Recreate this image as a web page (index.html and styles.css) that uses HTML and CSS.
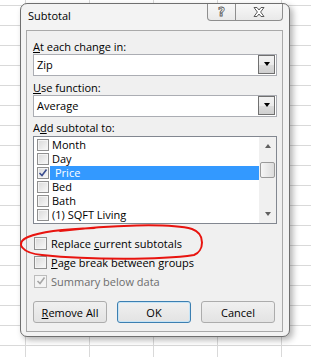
FILE: index.html
```html
<!DOCTYPE html>
<html lang="en">

<head>
    <meta charset="utf-8">
    <meta name="viewport" content="width=device-width, initial-scale=1">
    <title>Subtotal</title>
    <link rel="stylesheet" href="styles.css">
</head>

<body>
    <div class="dialog">
        <div class="titlebar">
            <span class="title">Subtotal</span>
            <div class="caption-btns">
                <span class="cap-btn help">?</span>
                <span class="cap-btn close">
                    <svg width="12" height="10" viewBox="0 0 12 10">
                        <polygon points="1,0.5 4,0.5 6,3 8,0.5 11,0.5 7.6,5 11,9.5 8,9.5 6,7 4,9.5 1,9.5 4.4,5" fill="#fff" stroke="#5a5a5a" stroke-width="1" stroke-linejoin="round"/>
                    </svg>
                </span>
            </div>
        </div>

        <div class="panel">
            <div class="field-label"><u>A</u>t each change in:</div>
            <div class="combo">
                <span class="combo-value">Zip</span>
                <span class="drop-btn"><span class="arrow-down"></span></span>
            </div>

            <div class="field-label gap-mid"><u>U</u>se function:</div>
            <div class="combo">
                <span class="combo-value">Average</span>
                <span class="drop-btn"><span class="arrow-down"></span></span>
            </div>

            <div class="field-label gap-small">A<u>d</u>d subtotal to:</div>
            <div class="listbox">
                <ul class="list-items">
                    <li><span class="check"></span><span class="item-text">Month</span></li>
                    <li><span class="check"></span><span class="item-text">Day</span></li>
                    <li class="selected">
                        <span class="check checked">
                            <svg width="10" height="10" viewBox="0 0 10 10"><polyline points="1.5,5 4,7.5 8.5,1.5" fill="none" stroke="#3b4d8f" stroke-width="1.6"/></svg>
                        </span>
                        <span class="item-text">Price</span>
                    </li>
                    <li><span class="check"></span><span class="item-text">Bed</span></li>
                    <li><span class="check"></span><span class="item-text">Bath</span></li>
                    <li><span class="check"></span><span class="item-text">(1) SQFT Living</span></li>
                </ul>
                <div class="scrollbar">
                    <span class="scroll-btn"><span class="arrow-up"></span></span>
                    <span class="thumb"></span>
                    <span class="scroll-btn bottom"><span class="arrow-down small"></span></span>
                </div>
            </div>

            <div class="options">
                <div class="option"><span class="check"></span><span>Replace <u>c</u>urrent subtotals</span></div>
                <div class="option"><span class="check"></span><span><u>P</u>age break between groups</span></div>
                <div class="option disabled">
                    <span class="check">
                        <svg width="10" height="10" viewBox="0 0 10 10"><polyline points="1.5,5 4,7.5 8.5,1.5" fill="none" stroke="#a6a6a6" stroke-width="1.6"/></svg>
                    </span>
                    <span>Summary below data</span>
                </div>
            </div>

            <div class="actions">
                <button type="button"><u>R</u>emove All</button>
                <button type="button" class="default">OK</button>
                <button type="button">Cancel</button>
            </div>

            <!-- red marker drawn over the screenshot -->
            <svg class="marker" width="190" height="44" viewBox="0 0 190 44">
                <path d="M40 8 C 90 2, 150 0, 172 6 C 186 11, 184 28, 174 32 C 140 37, 70 37, 22 32 C 2 30, -6 20, 8 14 C 22 8, 45 6, 75 5" fill="none" stroke="#e8140f" stroke-width="2" stroke-linecap="round"/>
            </svg>
        </div>
    </div>
</body>

</html>
```

FILE: styles.css
```css
body {
    margin: 0;
    padding: 0;
    width: 311px;
    height: 357px;
    overflow: hidden;
    font-family: "Open Sans", "Noto Sans", sans-serif;
    font-size: 11px;
    color: #000;
    background-color: #fff;
    background-image:
        linear-gradient(90deg, #d9d9d9 1px, transparent 1px),
        linear-gradient(180deg, #d9d9d9 1px, transparent 1px);
    background-size: 64px 100%, 100% 20px;
    background-position: 25px 0, 0 5px;
}

.dialog {
    box-sizing: border-box;
    margin: 3px 0 0 20px;
    width: 270px;
    height: 334px;
    border: 1px solid #6f6f6f;
    border-radius: 7px;
    background-color: #f3f3f3;
    box-shadow: 3px 3px 6px rgba(0, 0, 0, 0.3);
    display: flex;
    flex-direction: column;
}

.titlebar {
    height: 26px;
    display: flex;
    justify-content: space-between;
    align-items: flex-start;
}

.title {
    padding: 4px 0 0 7px;
    line-height: 16px;
    font-size: 11px;
}

.caption-btns {
    display: flex;
    margin-right: 6px;
    height: 17px;
    border: 1px solid #8e8e8e;
    border-top: none;
    border-radius: 0 0 4px 4px;
    background: linear-gradient(#f8f8f8, #e9e9e9);
    box-sizing: border-box;
}

.cap-btn {
    display: flex;
    align-items: center;
    justify-content: center;
}

.help {
    width: 27px;
    border-right: 1px solid #8e8e8e;
    font-family: "DejaVu Sans", sans-serif;
    font-weight: bold;
    font-size: 12px;
    color: #fff;
    -webkit-text-stroke: 0.8px #5a5a5a;
    line-height: 16px;
}

.close {
    width: 46px;
}

.panel {
    position: relative;
    box-sizing: border-box;
    height: 302px;
    margin: 0 6px 0 5px;
    padding: 0 5px 0 6px;
    border: 1px solid #a9a9a9;
    background-color: #f0f0f0;
}

.field-label {
    line-height: 15px;
    margin-top: 8px;
}

.field-label.gap-mid {
    margin-top: 4px;
}

.field-label.gap-small {
    margin-top: 3px;
    margin-bottom: 1px;
}

.combo {
    box-sizing: border-box;
    height: 22px;
    border: 1px solid #abadb3;
    background-color: #fff;
    display: flex;
    align-items: center;
}

.combo-value {
    flex: 1;
    padding-left: 3px;
    line-height: 20px;
}

.drop-btn {
    box-sizing: border-box;
    width: 17px;
    height: 19px;
    margin: 0 1px 1px 0;
    align-self: flex-end;
    border: 1px solid #707070;
    background: linear-gradient(#f2f2f2 0%, #ebebeb 50%, #dddddd 50%, #cfcfcf 100%);
    display: flex;
    align-items: center;
    justify-content: center;
}

.arrow-down {
    width: 0;
    height: 0;
    border-left: 3.5px solid transparent;
    border-right: 3.5px solid transparent;
    border-top: 4px solid #000;
    margin-top: -1px;
}

.arrow-down.small {
    border-top-color: #606060;
}

.arrow-up {
    width: 0;
    height: 0;
    border-left: 3.5px solid transparent;
    border-right: 3.5px solid transparent;
    border-bottom: 4px solid #606060;
}

.listbox {
    box-sizing: border-box;
    height: 88px;
    border: 1px solid #828790;
    background-color: #fff;
    display: flex;
}

.list-items {
    flex: 1;
    list-style: none;
    margin: 0;
    padding: 1px 0 0 3px;
}

.list-items li {
    height: 14px;
    display: flex;
    align-items: center;
}

.check {
    box-sizing: border-box;
    width: 12px;
    height: 12px;
    flex: none;
    border: 1px solid #8f8f8f;
    background: linear-gradient(135deg, #d9d9d9, #f9f9f9);
    box-shadow: inset 0 0 0 1px #f4f4f4;
    display: flex;
    align-items: center;
    justify-content: center;
}

.check svg {
    display: block;
}

.item-text {
    flex: 1;
    margin-left: 1px;
    padding-left: 2px;
    line-height: 14px;
}

.selected .item-text {
    background-color: #3399ff;
    color: #fff;
    padding-left: 5px;
}

.scrollbar {
    width: 17px;
    background-color: #f0f0f0;
    display: flex;
    flex-direction: column;
    align-items: center;
}

.scroll-btn {
    height: 17px;
    width: 17px;
    display: flex;
    align-items: center;
    justify-content: center;
}

.scroll-btn.bottom {
    margin-top: auto;
}

.thumb {
    box-sizing: border-box;
    margin-top: 8px;
    width: 15px;
    height: 16px;
    border: 1px solid #9a9a9a;
    border-radius: 2px;
    background: linear-gradient(90deg, #f6f6f6, #dcdcdc);
}

.options {
    margin-top: 10px;
}

.option {
    height: 19px;
    display: flex;
    align-items: center;
}

.option:last-child {
    height: 18px;
}

.option .check {
    width: 13px;
    height: 13px;
    margin: 0 4px 0 1px;
}

.option.disabled {
    color: #6d6d6d;
}

.option.disabled .check {
    border-color: #bcbcbc;
    background: #f4f4f4;
}

.actions {
    margin-top: 11px;
    display: flex;
    gap: 10px;
}

.actions button {
    box-sizing: border-box;
    width: 74px;
    height: 22px;
    padding: 0;
    border: 1px solid #acacac;
    border-radius: 3px;
    background: linear-gradient(#f0f0f0, #e3e3e3);
    font-family: inherit;
    font-size: 11px;
    color: #000;
}

.actions button.default {
    border-color: #3c7fb1;
    box-shadow: inset 0 0 0 1px #c6e4f6;
}

.marker {
    position: absolute;
    left: -7px;
    top: 192px;
    overflow: visible;
}
```
